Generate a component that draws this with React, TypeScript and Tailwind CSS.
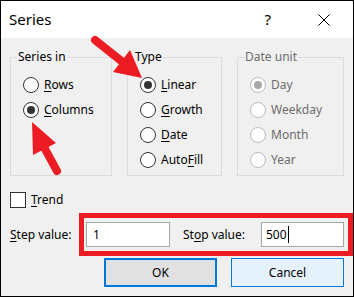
import React from 'react'

const U = ({ children }: { children: React.ReactNode }) => (
  <span className="underline decoration-1 underline-offset-[2px]">{children}</span>
)

const Radio = ({
  label,
  checked = false,
  disabled = false,
}: {
  label: React.ReactNode
  checked?: boolean
  disabled?: boolean
}) => (
  <div className="flex h-[25px] items-center">
    <div
      className={
        'flex h-4 w-4 items-center justify-center rounded-full border bg-white ' +
        (disabled ? 'border-[#bcbcbc]' : 'border-[#333333]')
      }
    >
      {checked && (
        <div className={'h-2 w-2 rounded-full ' + (disabled ? 'bg-[#a8a8a8]' : 'bg-[#333333]')} />
      )}
    </div>
    <span className={'ml-[5px] ' + (disabled ? 'text-[#6d6d6d]' : 'text-black')}>{label}</span>
  </div>
)

const Group = ({
  title,
  width,
  disabled = false,
  children,
}: {
  title: string
  width: string
  disabled?: boolean
  children: React.ReactNode
}) => (
  <fieldset className={'h-[127px] border border-[#dcdcdc] ' + width}>
    <legend className={'ml-[6px] px-[1px] leading-[16px] ' + (disabled ? 'text-[#6d6d6d]' : 'text-black')}>
      {title}
    </legend>
    <div className="flex flex-col pl-[12px] pt-[7px]">{children}</div>
  </fieldset>
)

const App = () => {
  return (
    <div
      className="relative flex h-[297px] w-[354px] flex-col border border-black bg-[#f0f0f0] text-[12px] text-black"
      style={{ fontFamily: '"Noto Sans", "Open Sans", sans-serif' }}
    >
      {/* title bar */}
      <div className="flex h-[37px] items-center bg-white pl-2 pr-[23px]">
        <span className="text-[15px]">Series</span>
        <span className="ml-auto text-[15px]">?</span>
        <svg className="ml-[47px]" width="12" height="12" viewBox="0 0 12 12">
          <path d="M0.5 0.5 L11.5 11.5 M11.5 0.5 L0.5 11.5" stroke="#000" strokeWidth="1" />
        </svg>
      </div>

      {/* body */}
      <div className="flex flex-1 flex-col pl-[9px] pt-[11px]">
        <div className="flex gap-[15px]">
          <Group title="Series in" width="w-[102px]">
            <Radio label={<><U>R</U>ows</>} />
            <Radio label={<><U>C</U>olumns</>} checked />
          </Group>
          <Group title="Type" width="w-[95px]">
            <Radio label={<><U>L</U>inear</>} checked />
            <Radio label={<><U>G</U>rowth</>} />
            <Radio label={<><U>D</U>ate</>} />
            <Radio label={<>Auto<U>F</U>ill</>} />
          </Group>
          <Group title="Date unit" width="w-[107px]" disabled>
            <Radio label="Day" checked disabled />
            <Radio label="Weekday" disabled />
            <Radio label="Month" disabled />
            <Radio label="Year" disabled />
          </Group>
        </div>

        <div className="mt-[16px] flex h-4 items-center">
          <div className="h-4 w-4 border border-[#333333] bg-white" />
          <span className="ml-[5px]">
            <U>T</U>rend
          </span>
        </div>

        <div className="mt-[14px] flex h-[25px] items-center">
          <span className="w-[76px]">
            <U>S</U>tep value:
          </span>
          <div className="flex h-[25px] w-[84px] items-center border border-[#a6a6a6] bg-white pl-[6px]">1</div>
          <span className="ml-[13px] w-[78px]">
            St<U>o</U>p value:
          </span>
          <div className="flex h-[25px] w-[83px] items-center border border-[#a6a6a6] bg-white pl-[4px]">
            500
            <div className="ml-[1px] h-[17px] w-px bg-black" />
          </div>
        </div>

        <div className="mt-[11px] flex justify-end gap-[14px] pr-[9px]">
          <button className="h-[29px] w-[113px] border-2 border-[#0078d7] bg-[#e1e1e1]">OK</button>
          <button className="h-[29px] w-[113px] border border-[#0078d7] bg-[#e5f1fb]">Cancel</button>
        </div>
      </div>

      {/* annotations */}
      <div className="pointer-events-none absolute left-[78px] top-[212px] h-[43px] w-[274px] border-[5px] border-[#ed1c24]" />
      <svg
        className="pointer-events-none absolute left-[-1px] top-[-1px]"
        width="354"
        height="297"
        viewBox="0 0 354 297"
      >
        <line x1="95" y1="40" x2="122" y2="61.5" stroke="#ed1c24" strokeWidth="8" strokeLinecap="round" />
        <polygon points="142,78 113,72 130,50" fill="#ed1c24" />
        <line x1="44.5" y1="148" x2="57" y2="171" stroke="#ed1c24" strokeWidth="8" strokeLinecap="round" />
        <polygon points="32,122 33,155 56,143" fill="#ed1c24" />
      </svg>
    </div>
  )
}

export default App
